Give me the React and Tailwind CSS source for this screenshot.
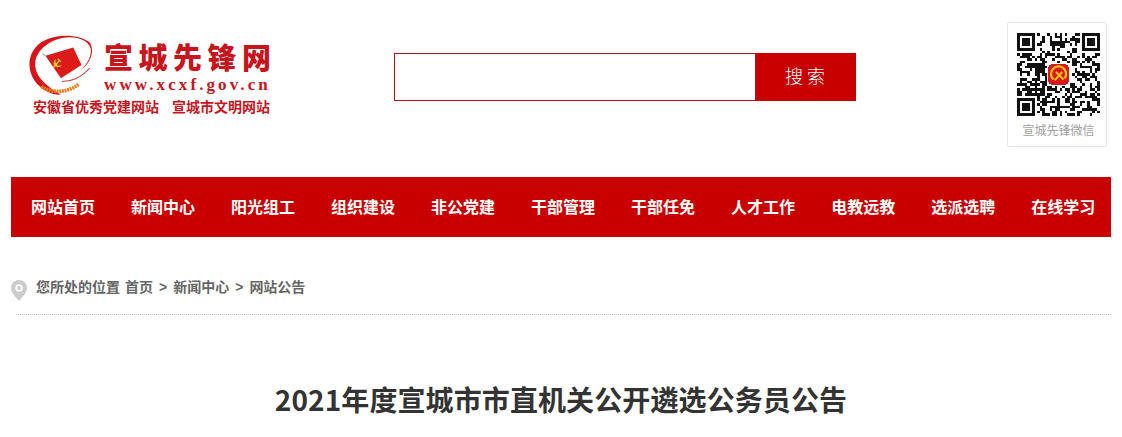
const NAV = ['网站首页', '新闻中心', '阳光组工', '组织建设', '非公党建', '干部管理', '干部任免', '人才工作', '电教远教', '选派选聘', '在线学习']

const SANS = "font-['Liberation_Sans','Noto_Sans_CJK_SC',sans-serif]"

function Emblem() {
  return (
    <svg width="72" height="64" viewBox="0 0 70 62" className="shrink-0">
      <path
        d="M60 8C50 0 25-2 10 10-3 22-1 42 14 53c6 4 12 6 18 6C20 52 6 42 7 28 8 14 25 3 40 3c11 0 19 4 21 11 1 8-4 16-10 21 8-5 15-17 9-27Z"
        fill="#d7141a"
      />
      <path d="M17 21 44 13 52 30 32 43Z" fill="#dc1a1a" />
      <path d="M17 21 14 19" stroke="#b8a0a0" strokeWidth="1" />
      <path d="M27 24c-3 3-3 7 1 8 2 .6 4-.5 5-2-2 1-4 1-5 0-1.500-1.500-1.500-4-1-6Z" fill="#f7d21e" />
      <path d="M25 32 31 25M29 24l3 3" stroke="#f7d21e" strokeWidth="1.300" />
      <path d="M33 46C42 46 52 42 60 33" stroke="#c9453f" strokeWidth="1" fill="none" />
      <path d="M13 51C24 58 38 57 49 49" stroke="#e2801f" strokeWidth="3.500" strokeDasharray="2 .6" fill="none" />
    </svg>
  )
}

function Logo() {
  return (
    <div className="w-[244px] pt-[34px] shrink-0 text-[#c8141c]">
      <div className="flex h-[64px]">
        <Emblem />
        <div className="ml-[4px] pt-[5px]">
          <p className="font-['Noto_Sans_CJK_SC',sans-serif] font-black text-[29px] leading-[34px] tracking-[5.500px] whitespace-nowrap">宣城先锋网</p>
          <p className="font-['Liberation_Serif',serif] font-bold text-[17px] leading-[18px] mt-[3px] tracking-[3.100px] whitespace-nowrap">www.xcxf.gov.cn</p>
        </div>
      </div>
      <div className="flex gap-[13px] ml-[5px] mt-px font-['Liberation_Serif','Noto_Sans_CJK_SC',serif] font-bold text-[14px] leading-[18px] whitespace-nowrap">
        <span>安徽省优秀党建网站</span>
        <span>宣城市文明网站</span>
      </div>
    </div>
  )
}

function SearchBox() {
  return (
    <div className={`flex h-[48px] w-[462px] mt-[53px] ml-[122px] shrink-0 ${SANS}`}>
      <input className="flex-1 min-w-0 bg-white border border-[#b3121d] outline-none" />
      <button className="w-[100px] pl-[2px] bg-[#c80000] text-white text-[18px] tracking-[4px] font-light">搜索</button>
    </div>
  )
}

// 33x33 grid: finder squares are fixed, the rest is a fixed scatter
function qrModules() {
  const n = 33
  const cells = []
  const finder = (dx, dy) =>
    dx === 0 || dx === 6 || dy === 0 || dy === 6 || (dx >= 2 && dx <= 4 && dy >= 2 && dy <= 4)
  for (let y = 0; y < n; y++) {
    for (let x = 0; x < n; x++) {
      const inTL = x < 8 && y < 8
      const inTR = x > 24 && y < 8
      const inBL = x < 8 && y > 24
      let on
      if (inTL || inTR || inBL) {
        const fx = inTR ? x - 26 : x
        const fy = inBL ? y - 26 : y
        on = fx >= 0 && fy >= 0 && fx < 7 && fy < 7 && finder(fx, fy)
      } else {
        const s = Math.sin(x * 12.9898 + y * 78.233) * 43758.5453
        on = s - Math.floor(s) < 0.52
      }
      if (on) cells.push([x, y])
    }
  }
  return cells
}

function QrCode() {
  return (
    <svg width="83" height="83" viewBox="0 0 33 33" shapeRendering="crispEdges" className="shrink-0">
      {qrModules().map(([x, y]) => (
        <rect key={`${x}-${y}`} x={x} y={y} width="1" height="1" fill="#111" />
      ))}
      <rect x="12" y="12" width="9" height="9" fill="#fff" />
      <rect x="12.500" y="12.500" width="8" height="8" rx="1" fill="#d9181c" />
      <path d="M14.500 18.500a3 3 0 1 1 4.500-.5" fill="none" stroke="#f6c21c" strokeWidth=".9" shapeRendering="auto" />
      <path d="M15 18.800 18 15.500M15.500 15.500l3 3" stroke="#f6c21c" strokeWidth=".8" shapeRendering="auto" />
    </svg>
  )
}

function QrBox() {
  return (
    <div className="w-[100px] h-[125px] mt-[22px] ml-[151px] shrink-0 border border-[#e8e8e8] rounded-[2px] flex flex-col items-center pt-[10px] pl-[3px]">
      <QrCode />
      <p className={`mt-[6px] text-[12px] leading-[18px] text-[#a0a0a0] whitespace-nowrap ${SANS}`}>宣城先锋微信</p>
    </div>
  )
}

function PinIcon() {
  return (
    <svg width="16" height="21" viewBox="0 0 16 21" className="shrink-0">
      <path d="M8 0a8 8 0 0 0-8 8c0 5 5 9 8 13 3-4 8-8 8-13a8 8 0 0 0-8-8Z" fill="#ccc" />
      <circle cx="8" cy="8" r="3.800" fill="#fff" />
      <circle cx="8" cy="8" r="2" fill="#ccc" />
    </svg>
  )
}

export default function App() {
  return (
    <div className={`bg-white h-[437px] overflow-hidden ${SANS}`}>
      <header className="flex h-[177px] pl-[28px]">
        <Logo />
        <SearchBox />
        <QrBox />
      </header>

      <nav className="flex gap-9 items-center h-[60px] mx-[11px] w-[1100px] px-5 pt-px bg-[#c80000]">
        {NAV.map((item) => (
          <a key={item} className="text-white text-[16px] font-bold whitespace-nowrap">{item}</a>
        ))}
      </nav>

      <div className="mx-[11px] w-[1100px] pt-[43px]">
        <div className="flex items-center h-[21px]">
          <PinIcon />
          <div className="flex gap-[6px] ml-[9px] -mt-[7px] text-[14px] leading-[20px] font-bold text-[#666] whitespace-nowrap">
            <span className="-mr-px">您所处的位置</span>
            <span>首页</span>
            <span>&gt;</span>
            <span>新闻中心</span>
            <span>&gt;</span>
            <span>网站公告</span>
          </div>
        </div>
        <div className="mt-[13px] ml-[5px] border-b border-dotted border-[#c4c4c4]" />
      </div>

      <h1 className="mt-[64px] text-center text-[28px] leading-[40px] tracking-[.1px] font-bold text-[#333] font-['Noto_Sans_CJK_SC',sans-serif]">
        2021年度宣城市市直机关公开遴选公务员公告
      </h1>
    </div>
  )
}
